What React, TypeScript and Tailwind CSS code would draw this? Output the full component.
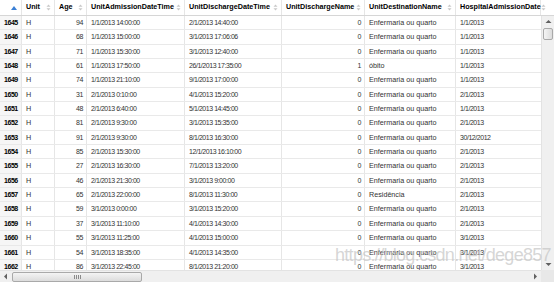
import { FC } from 'react';

type Row = [string, string, string, string, string, string, string, string];

const rows: Row[] = [
  ['1645', 'H', '94', '1/1/2013 14:00:00', '2/1/2013 14:40:00', '0', 'Enfermaria ou quarto', '1/1/2013'],
  ['1646', 'H', '68', '1/1/2013 15:00:00', '3/1/2013 17:06:06', '0', 'Enfermaria ou quarto', '1/1/2013'],
  ['1647', 'H', '71', '1/1/2013 15:30:00', '3/1/2013 12:40:00', '0', 'Enfermaria ou quarto', '1/1/2013'],
  ['1648', 'H', '61', '1/1/2013 17:50:00', '26/1/2013 17:35:00', '1', 'óbito', '1/1/2013'],
  ['1649', 'H', '74', '1/1/2013 21:10:00', '9/1/2013 17:00:00', '0', 'Enfermaria ou quarto', '1/1/2013'],
  ['1650', 'H', '31', '2/1/2013 0:10:00', '4/1/2013 15:20:00', '0', 'Enfermaria ou quarto', '2/1/2013'],
  ['1651', 'H', '48', '2/1/2013 6:40:00', '5/1/2013 14:45:00', '0', 'Enfermaria ou quarto', '1/1/2013'],
  ['1652', 'H', '81', '2/1/2013 9:30:00', '3/1/2013 15:35:00', '0', 'Enfermaria ou quarto', '2/1/2013'],
  ['1653', 'H', '91', '2/1/2013 9:30:00', '8/1/2013 16:30:00', '0', 'Enfermaria ou quarto', '30/12/2012'],
  ['1654', 'H', '85', '2/1/2013 15:30:00', '12/1/2013 16:10:00', '0', 'Enfermaria ou quarto', '2/1/2013'],
  ['1655', 'H', '27', '2/1/2013 16:30:00', '7/1/2013 13:20:00', '0', 'Enfermaria ou quarto', '2/1/2013'],
  ['1656', 'H', '46', '2/1/2013 21:30:00', '3/1/2013 9:00:00', '0', 'Enfermaria ou quarto', '2/1/2013'],
  ['1657', 'H', '65', '2/1/2013 22:00:00', '8/1/2013 11:30:00', '0', 'Residência', '2/1/2013'],
  ['1658', 'H', '59', '3/1/2013 0:00:00', '3/1/2013 15:20:00', '0', 'Enfermaria ou quarto', '2/1/2013'],
  ['1659', 'H', '37', '3/1/2013 11:10:00', '4/1/2013 14:30:00', '0', 'Enfermaria ou quarto', '2/1/2013'],
  ['1660', 'H', '55', '3/1/2013 11:25:00', '4/1/2013 15:00:00', '0', 'Enfermaria ou quarto', '3/1/2013'],
  ['1661', 'H', '54', '3/1/2013 18:35:00', '4/1/2013 14:35:00', '0', 'Enfermaria ou quarto', '3/1/2013'],
  ['1662', 'H', '86', '3/1/2013 22:45:00', '8/1/2013 21:20:00', '0', 'Enfermaria ou quarto', '3/1/2013'],
];

const headers = [
  'Unit',
  'Age',
  'UnitAdmissionDateTime',
  'UnitDischargeDateTime',
  'UnitDischargeName',
  'UnitDestinationName',
  'HospitalAdmissionDate',
];

const widths = ['w-[22px]', 'w-[33px]', 'w-[32px]', 'w-[98px]', 'w-[97px]', 'w-[83px]', 'w-[91px]', 'w-[85px]'];

// digits in the reference run narrower than the letters
const num = 'text-[7px] tracking-[-0.45px] leading-[14px]';
const word = 'text-[7.2px] leading-[14px]';
const cell = 'shrink-0 border-r border-[#e6e6e6]';

const SortIcon: FC = () => (
  <svg width="5" height="7" viewBox="0 0 5 7" className="shrink-0">
    <path d="M2.5 0.5 L4.5 2.8 L0.5 2.8 Z" fill="#c8c8c8" />
    <path d="M2.5 6.5 L4.5 4.2 L0.5 4.2 Z" fill="#c8c8c8" />
  </svg>
);

const Arrow: FC<{ dir: 'up' | 'down' | 'left' | 'right' }> = ({ dir }) => {
  const d = {
    up: 'M0.5 4 L3.5 1 L6.5 4 Z',
    down: 'M0.5 2 L3.5 5 L6.5 2 Z',
    left: 'M4 0.5 L1 3.5 L4 6.5 Z',
    right: 'M2 0.5 L5 3.5 L2 6.5 Z',
  }[dir];
  return (
    <svg width="7" height="7" viewBox="0 0 7 7">
      <path d={d} fill="#606060" />
    </svg>
  );
};

export default function App() {
  return (
    <div className="relative flex h-[282px] w-[554px] flex-col overflow-hidden bg-white font-['Liberation_Sans',Arial,sans-serif] text-[#333]">
      {/* header */}
      <div className="flex h-[16px] shrink-0 border-b border-[#d6d6d6] bg-white">
        <div className={`${widths[0]} ${cell} flex items-center justify-end pr-[4px]`}>
          <svg width="6" height="4" viewBox="0 0 6 4">
            <path d="M3 0 L6 4 L0 4 Z" fill="#3a7fd5" />
          </svg>
        </div>
        {headers.map((h, i) => (
          <div
            key={h}
            className={`${widths[i + 1]} ${cell} flex items-center justify-between pl-[4px] pr-[3px] text-[7.2px] font-bold text-black`}
          >
            <span>{h}</span>
            <SortIcon />
          </div>
        ))}
      </div>

      {/* body + vertical scrollbar */}
      <div className="flex min-h-0 flex-1">
        <div className="w-[541px] shrink-0 overflow-hidden">
          {rows.map((r) => (
            <div key={r[0]} className="flex h-[14.35px] border-b border-[#e9e9e9]">
              <div className={`${widths[0]} ${cell} ${num} bg-[#f6f6f6] pl-[4px] font-bold text-black`}>{r[0]}</div>
              <div className={`${widths[1]} ${cell} ${word} pl-[4px]`}>{r[1]}</div>
              <div className={`${widths[2]} ${cell} ${num} pr-[3px] text-right`}>{r[2]}</div>
              <div className={`${widths[3]} ${cell} ${num} pl-[4px]`}>{r[3]}</div>
              <div className={`${widths[4]} ${cell} ${num} pl-[4px]`}>{r[4]}</div>
              <div className={`${widths[5]} ${cell} ${num} pr-[3px] text-right`}>{r[5]}</div>
              <div className={`${widths[6]} ${cell} ${word} pl-[4px]`}>{r[6]}</div>
              <div className={`${widths[7]} shrink-0 pl-[4px] ${num}`}>{r[7]}</div>
            </div>
          ))}
        </div>
        <div className="flex w-[13px] shrink-0 flex-col items-center border-l border-[#e3e3e3] bg-[#f0f0f0]">
          <div className="flex h-[12px] items-center justify-center">
            <Arrow dir="up" />
          </div>
          <div className="h-[12px] w-[10px] rounded-[2px] border border-[#a9a9a9] bg-gradient-to-r from-[#f4f4f4] to-[#dcdcdc]" />
          <div className="flex-1" />
          <div className="flex h-[12px] items-center justify-center">
            <Arrow dir="down" />
          </div>
        </div>
      </div>

      {/* horizontal scrollbar */}
      <div className="flex h-[12px] shrink-0">
        <div className="flex w-[541px] shrink-0 items-center border-t border-[#e3e3e3] bg-[#f0f0f0]">
          <div className="flex w-[12px] justify-center">
            <Arrow dir="left" />
          </div>
          <div className="flex h-[10px] w-[130px] items-center justify-center rounded-[2px] border border-[#a9a9a9] bg-gradient-to-b from-[#f4f4f4] to-[#dcdcdc]">
            <div className="flex gap-[1px]">
              <div className="h-[4px] w-[1px] bg-[#8a8a8a]" />
              <div className="h-[4px] w-[1px] bg-[#8a8a8a]" />
              <div className="h-[4px] w-[1px] bg-[#8a8a8a]" />
              <div className="h-[4px] w-[1px] bg-[#8a8a8a]" />
            </div>
          </div>
          <div className="flex-1" />
          <div className="flex w-[12px] justify-center">
            <Arrow dir="right" />
          </div>
        </div>
        <div className="w-[13px] shrink-0 bg-[#e8e8e8]" />
      </div>

      {/* watermark */}
      <div className="pointer-events-none absolute left-[335px] top-[246px] text-[18px] leading-none tracking-[-0.7px] text-[#c4c4c4]/70">
        https://blog.csdn.net/dege857
      </div>
    </div>
  );
}
